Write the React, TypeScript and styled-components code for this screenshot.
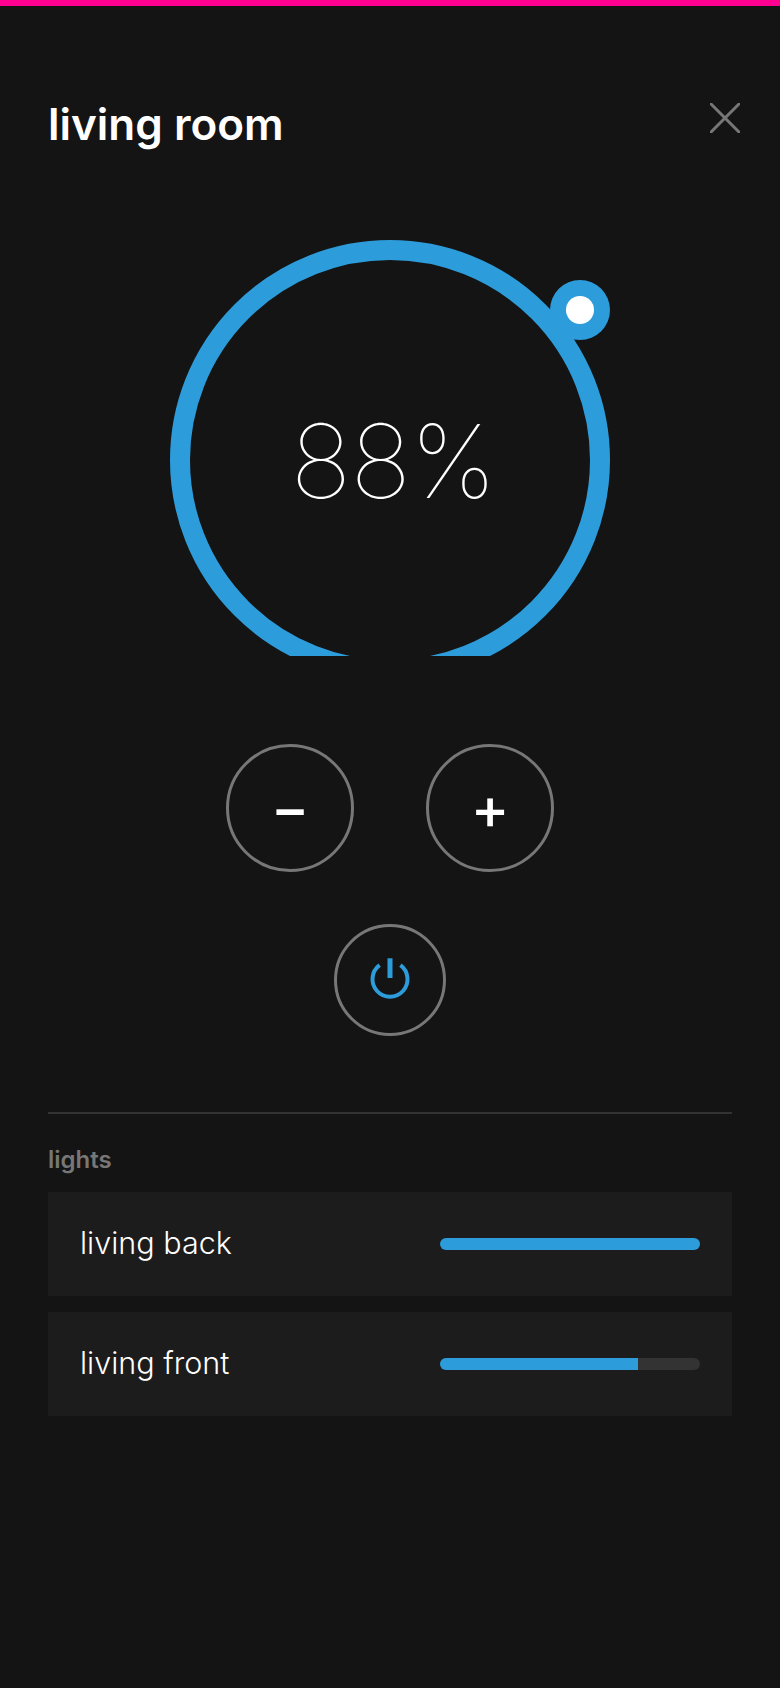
import React from 'react'
import styled, { createGlobalStyle } from 'styled-components'

const BLUE = '#2d9cdb'

const GlobalStyle = createGlobalStyle`
  html, body {
    margin: 0;
    padding: 0;
    background: #141414;
    font-family: Inter, "Liberation Sans", sans-serif;
  }
`

const Page = styled.div`
  box-sizing: border-box;
  width: 780px;
  height: 1688px;
  overflow: hidden;
  padding: 0 48px;
  background: #141414;
  border-top: 6px solid #ff0090;
  color: #fff;
`

const Header = styled.header`
  display: flex;
  justify-content: space-between;
  align-items: flex-start;
  height: 234px;
  padding-top: 91px;
  box-sizing: border-box;
`

const Title = styled.h1`
  margin: 0;
  font-size: 44px;
  line-height: 54px;
  font-weight: 600;
`

const CloseButton = styled.button`
  display: flex;
  margin: 6px -8px 0 0;
  padding: 0;
  border: 0;
  background: none;
`

const Dial = styled.div`
  position: relative;
  width: 440px;
  height: 416px;
  margin: 0 auto;
  overflow: hidden;
`

const Value = styled.div`
  position: absolute;
  top: 1px;
  left: 3px;
  width: 440px;
  height: 440px;
  display: flex;
  align-items: center;
  justify-content: center;
  font-size: 102px;
  font-weight: 100;
  letter-spacing: -1px;
`

const Controls = styled.div`
  display: flex;
  flex-direction: column;
  align-items: center;
  gap: 52px;
  margin-top: 88px;
`

const StepRow = styled.div`
  display: flex;
  gap: 72px;
`

const RoundButton = styled.button<{ $size: number }>`
  box-sizing: border-box;
  display: flex;
  align-items: center;
  justify-content: center;
  width: ${({ $size }) => $size}px;
  height: ${({ $size }) => $size}px;
  padding: 0;
  border: 3px solid #777;
  border-radius: 50%;
  background: none;
  color: #fff;
  font-family: inherit;
  font-size: 58px;
  font-weight: 500;
  line-height: 1;
`

const Divider = styled.hr`
  height: 2px;
  margin: 76px 0 0;
  border: 0;
  background: #333;
`

const SectionLabel = styled.h2`
  margin: 26px 0 0;
  font-size: 24px;
  line-height: 40px;
  font-weight: 600;
  color: #777;
`

const LightList = styled.div`
  display: flex;
  flex-direction: column;
  gap: 16px;
  margin-top: 12px;
`

const LightRow = styled.div`
  display: flex;
  align-items: center;
  justify-content: space-between;
  height: 104px;
  padding: 0 32px;
  background: #1c1c1c;
`

const LightName = styled.span`
  padding-bottom: 4px;
  font-size: 30.5px;
  font-weight: 300;
`

const Track = styled.div`
  width: 260px;
  height: 12px;
  border-radius: 6px;
  overflow: hidden;
  background: #333;
`

const Fill = styled.div`
  height: 100%;
  background: ${BLUE};
`

const lights = [
  { name: 'living back', level: 100 },
  { name: 'living front', level: 76 },
]

export default function App() {
  return (
    <Page>
      <GlobalStyle />
      <Header>
        <Title>living room</Title>
        <CloseButton aria-label="close">
          <svg width="30" height="30" viewBox="0 0 30 30" fill="none" stroke="#777" strokeWidth="3">
            <path d="M0 0l30 30M30 0L0 30" />
          </svg>
        </CloseButton>
      </Header>

      <Dial>
        <svg width="440" height="440" viewBox="0 0 440 440">
          <circle cx="220" cy="220" r="210" fill="none" stroke={BLUE} strokeWidth="20" />
          <circle cx="410" cy="70" r="30" fill={BLUE} />
          <circle cx="410" cy="70" r="14" fill="#fff" />
        </svg>
        <Value>88%</Value>
      </Dial>

      <Controls>
        <StepRow>
          <RoundButton $size={128}>−</RoundButton>
          <RoundButton $size={128}>+</RoundButton>
        </StepRow>
        <RoundButton $size={112} aria-label="power">
          <svg width="48" height="48" viewBox="0 0 48 48" fill="none" stroke={BLUE}>
            <path d="M13.6 9.2A17.5 17.5 0 1 0 34.4 9.2" strokeWidth="4" />
            <path d="M24 2.3V22" strokeWidth="5" />
          </svg>
        </RoundButton>
      </Controls>

      <Divider />
      <SectionLabel>lights</SectionLabel>
      <LightList>
        {lights.map((light) => (
          <LightRow key={light.name}>
            <LightName>{light.name}</LightName>
            <Track>
              <Fill style={{ width: `${light.level}%` }} />
            </Track>
          </LightRow>
        ))}
      </LightList>
    </Page>
  )
}
